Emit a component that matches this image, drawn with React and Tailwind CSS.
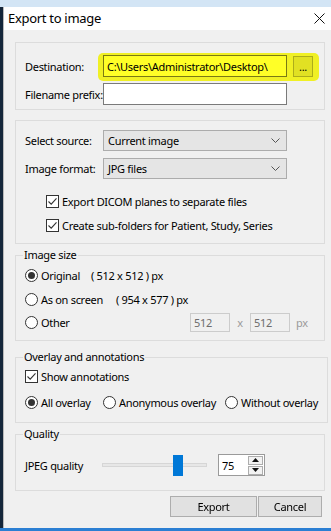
import React from 'react'

function Check({ children }) {
  return (
    <span className="flex items-center gap-[3px]">
      <span className="w-[13px] h-[13px] border border-[#333] bg-white flex items-center justify-center">
        <svg width="11" height="11" viewBox="0 0 11 11">
          <path d="M1.5 5.5 L4.2 8.2 L9.5 2.3" fill="none" stroke="#333" strokeWidth="1.1" />
        </svg>
      </span>
      <span>{children}</span>
    </span>
  )
}

function Radio({ checked, children }) {
  return (
    <span className="flex items-center gap-[3px]">
      <span className="w-[13px] h-[13px] rounded-full border border-[#333] bg-white flex items-center justify-center">
        {checked && <span className="w-[7px] h-[7px] rounded-full bg-[#333]" />}
      </span>
      <span>{children}</span>
    </span>
  )
}

function Select({ children }) {
  return (
    <div className="w-[184px] h-full border border-[#acacac] bg-[#e5e5e5] flex items-center justify-between pl-[4px] pr-[6px]">
      <span>{children}</span>
      <svg width="9" height="5" viewBox="0 0 9 5">
        <path d="M0.5 0.5 L4.5 4.5 L8.5 0.5" fill="none" stroke="#555" />
      </svg>
    </div>
  )
}

function Legend({ children }) {
  return <legend className="-ml-[2px] px-[1px] h-[16px] leading-[16px]">{children}</legend>
}

function Disabled({ children }) {
  return (
    <div className="w-[40px] h-[19px] border border-[#cccccc] bg-[#f0f0f0] text-[#6d6d6d] flex items-center pl-[3px]">
      {children}
    </div>
  )
}

export default function App() {
  return (
    <div className="w-[331px] h-[531px] flex flex-col overflow-hidden whitespace-nowrap font-['Noto_Sans',sans-serif] text-[11px] tracking-[-0.3px] text-black leading-none">
      <div className="h-[7px] shrink-0 bg-[#d3e5f5]" />
      <div className="flex flex-1 min-h-0">
        <div className="w-[3px] shrink-0 bg-[#14263a]" />
        <div className="flex-1 min-w-0 flex flex-col border-l border-[#b9b9b9] bg-[#f0f0f0]">
          <div className="h-[23px] shrink-0 bg-white flex items-center justify-between pl-[4px] pr-[6px]">
            <span className="text-[13px]">Export to image</span>
            <svg width="11" height="11" viewBox="0 0 11 11">
              <path d="M0.5 0.5 L10.5 10.5 M10.5 0.5 L0.5 10.5" stroke="#111" strokeWidth="1" />
            </svg>
          </div>

          <div className="flex-1 flex flex-col pt-[12px] pl-[11px] pr-[6px]">
            {/* destination */}
            <div className="relative border border-[#dcdcdc] pt-[12px] pb-[4px] px-[9px] flex flex-col gap-[6px]">
              <div className="flex items-center h-[22px]">
                <span className="w-[78px]">Destination:</span>
                <div className="w-[184px] h-[22px] border border-[#7a7a7a] bg-white flex items-center px-[3px]">
                  {'C:\\Users\\Administrator\\Desktop\\'}
                </div>
                <div className="ml-[6px] w-[20px] h-[21px] border border-[#adadad] bg-[#e1e1e1] flex items-center justify-center">
                  ...
                </div>
              </div>
              <div className="flex items-center h-[22px]">
                <span className="w-[78px]">Filename prefix:</span>
                <div className="w-[184px] h-[22px] border border-[#7a7a7a] bg-white" />
              </div>
              <div className="absolute left-[82px] top-[10px] w-[221px] h-[28px] rounded-[5px] bg-[#ffff00] opacity-85 mix-blend-multiply" />
            </div>

            {/* source */}
            <div className="mt-[10px] border border-[#dcdcdc] pt-[9px] pb-[6px] px-[9px]">
              <div className="flex items-center h-[21px]">
                <span className="w-[78px]">Select source:</span>
                <Select>Current image</Select>
              </div>
              <div className="flex items-center h-[21px] mt-[7px]">
                <span className="w-[78px]">Image format:</span>
                <Select>JPG files</Select>
              </div>
              <div className="mt-[10px] ml-[21px] flex flex-col">
                <div className="h-[24px] flex items-center">
                  <Check>Export DICOM planes to separate files</Check>
                </div>
                <div className="h-[24px] flex items-center">
                  <Check>Create sub-folders for Patient, Study, Series</Check>
                </div>
              </div>
            </div>

            {/* image size */}
            <fieldset className="mt-[3px] border border-[#dcdcdc] px-[9px] pb-[7px]">
              <Legend>Image size</Legend>
              <div className="h-[25px] flex items-center">
                <span className="w-[66px]"><Radio checked>Original</Radio></span>
                <span>( 512 x 512 ) px</span>
              </div>
              <div className="h-[23px] flex items-center">
                <span className="w-[91px]"><Radio>As on screen</Radio></span>
                <span>( 954 x 577 ) px</span>
              </div>
              <div className="h-[22px] flex items-center">
                <span className="w-[165px]"><Radio>Other</Radio></span>
                <Disabled>512</Disabled>
                <span className="w-[20px] text-center text-[#9a9a9a]">x</span>
                <Disabled>512</Disabled>
                <span className="ml-[6px] text-[#9a9a9a]">px</span>
              </div>
            </fieldset>

            {/* overlay */}
            <fieldset className="mt-[8px] border border-[#dcdcdc] px-[9px] pb-[5px]">
              <Legend>Overlay and annotations</Legend>
              <div className="h-[22px] flex items-center">
                <Check>Show annotations</Check>
              </div>
              <div className="h-[30px] flex items-center">
                <span className="w-[78px]"><Radio checked>All overlay</Radio></span>
                <span className="w-[122px]"><Radio>Anonymous overlay</Radio></span>
                <Radio>Without overlay</Radio>
              </div>
            </fieldset>

            {/* quality */}
            <fieldset className="mt-[3px] border border-[#dcdcdc] px-[9px] pt-[12px] pb-[14px]">
              <Legend>Quality</Legend>
              <div className="h-[22px] flex items-center">
                <span className="w-[77px]">JPEG quality</span>
                <div className="relative w-[105px] h-[22px] flex items-center">
                  <div className="w-full h-[4px] bg-[#e7e7e7] border border-[#d6d6d6]" />
                  <div className="absolute left-[71px] top-[1px] w-[10px] h-[21px] bg-[#0078d7]" />
                </div>
                <div className="ml-[11px] w-[47px] h-[22px] border border-[#9a9a9a] bg-white flex items-center">
                  <span className="pl-[3px] flex-1">75</span>
                  <div className="flex flex-col gap-[1px] mr-[1px]">
                    <div className="w-[15px] h-[9px] border border-[#adadad] bg-[#f2f2f2] flex items-center justify-center">
                      <svg width="7" height="4" viewBox="0 0 7 4"><path d="M0 4 L3.5 0 L7 4 Z" fill="#111" /></svg>
                    </div>
                    <div className="w-[15px] h-[9px] border border-[#adadad] bg-[#f2f2f2] flex items-center justify-center">
                      <svg width="7" height="4" viewBox="0 0 7 4"><path d="M0 0 L3.5 4 L7 0 Z" fill="#111" /></svg>
                    </div>
                  </div>
                </div>
              </div>
            </fieldset>

            {/* buttons */}
            <div className="mt-[5px] flex justify-end gap-[1px] pr-[3px]">
              <div className="w-[87px] h-[21px] border border-[#adadad] bg-[#e1e1e1] flex items-center justify-center">Export</div>
              <div className="w-[64px] h-[21px] border border-[#adadad] bg-[#e1e1e1] flex items-center justify-center">Cancel</div>
            </div>
          </div>
        </div>
      </div>
      <div className="h-[3px] shrink-0 bg-[#2b7fd3]" />
    </div>
  )
}
